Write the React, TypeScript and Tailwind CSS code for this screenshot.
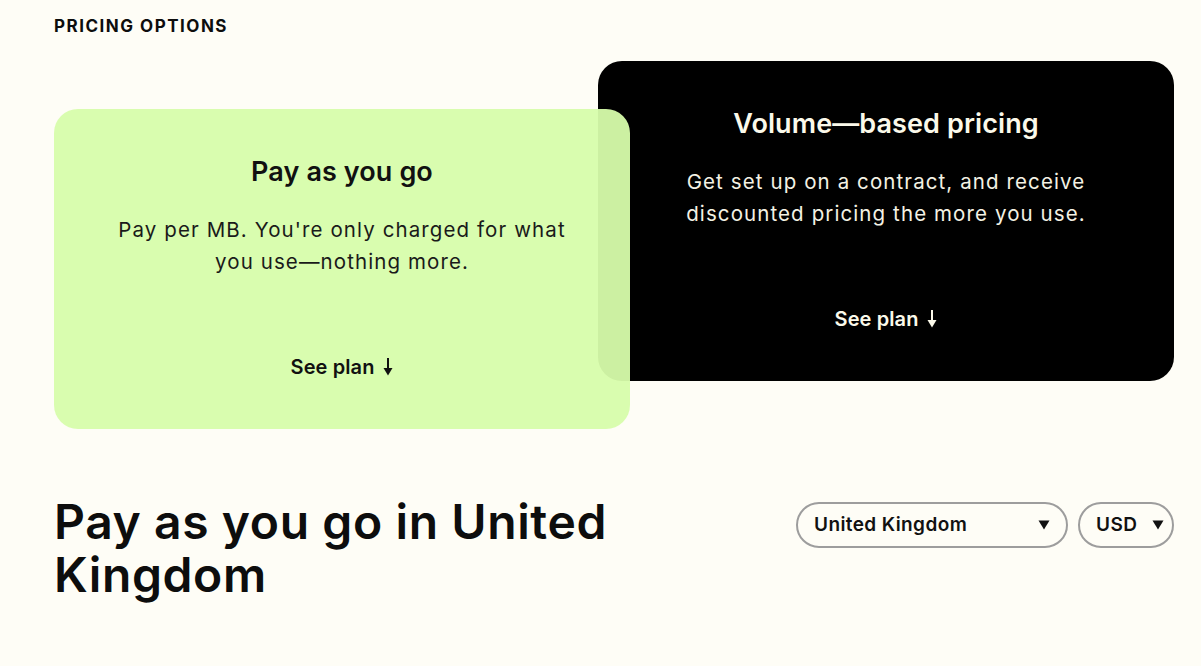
function ArrowDown({ className }: { className?: string }) {
  return (
    <svg viewBox="0 0 10 18" className={className} fill="currentColor" aria-hidden>
      <rect x="4" y="0" width="2" height="11" />
      <path d="M0.5 10 L9.5 10 L5 17.5 Z" />
    </svg>
  )
}

function Caret() {
  return (
    <svg viewBox="0 0 12 10" className="h-[10px] w-[12px]" fill="currentColor" aria-hidden>
      <path d="M0.5 0.5 L11.5 0.5 L6 9.5 Z" />
    </svg>
  )
}

type CardProps = {
  title: string
  body: string
  dark?: boolean
  className?: string
}

function PlanCard({ title, body, dark, className }: CardProps) {
  return (
    <div
      className={`flex h-[320px] w-[576px] shrink-0 flex-col items-center rounded-[24px] px-[50px] pt-[47px] pb-[50px] text-center ${
        dark ? 'bg-black text-[#fbf9ea]' : 'bg-[#d7fdab]/95 text-[#111]'
      } ${className ?? ''}`}
    >
      <h2 className="text-[27px] leading-[32px] font-semibold tracking-[0.1px]">{title}</h2>
      <p
        className={`mt-[26px] text-[20.5px] leading-[32px] tracking-[1.1px] ${
          dark ? 'text-[#f4f2e4]' : 'text-[#1a1a1a]'
        }`}
      >
        {body}
      </p>
      <button className="mt-auto flex items-center gap-[9px] text-[20px] leading-[24px] font-semibold tracking-[0.1px]">
        See plan
        <ArrowDown className="h-[18px] w-[10px]" />
      </button>
    </div>
  )
}

function Select({ label, width, pr }: { label: string; width: string; pr: string }) {
  return (
    <button
      className={`flex h-[46px] ${width} ${pr} items-center justify-between rounded-full border-2 border-[#9d9d9d] pl-[16px] text-[19px] font-semibold tracking-[0.4px] text-[#111]`}
    >
      <span>{label}</span>
      <Caret />
    </button>
  )
}

export default function App() {
  return (
    <div
      className="min-h-[666px] bg-[#fefdf6] pt-[14px] pr-[27px] pl-[54px] text-[#0d0d0d]"
      style={{ fontFamily: 'Inter, "Noto Sans", sans-serif' }}
    >
      <div className="text-[17px] leading-[24px] font-bold tracking-[1.5px]">PRICING OPTIONS</div>

      <div className="mt-[23px] flex items-start">
        <PlanCard
          className="relative z-10 mt-[48px]"
          title="Pay as you go"
          body="Pay per MB. You're only charged for what you use—nothing more."
        />
        <PlanCard
          dark
          className="-ml-[32px]"
          title="Volume—based pricing"
          body="Get set up on a contract, and receive discounted pricing the more you use."
        />
      </div>

      <div className="mt-[66px] flex items-start justify-between">
        <h1 className="w-[620px] text-[48px] leading-[53px] font-semibold tracking-[0.6px]">
          Pay as you go in United Kingdom
        </h1>
        <div className="mt-[7px] flex gap-[10px]">
          <Select label="United Kingdom" width="w-[272px]" pr="pr-[16px]" />
          <Select label="USD" width="w-[96px]" pr="pr-[8px]" />
        </div>
      </div>
    </div>
  )
}
